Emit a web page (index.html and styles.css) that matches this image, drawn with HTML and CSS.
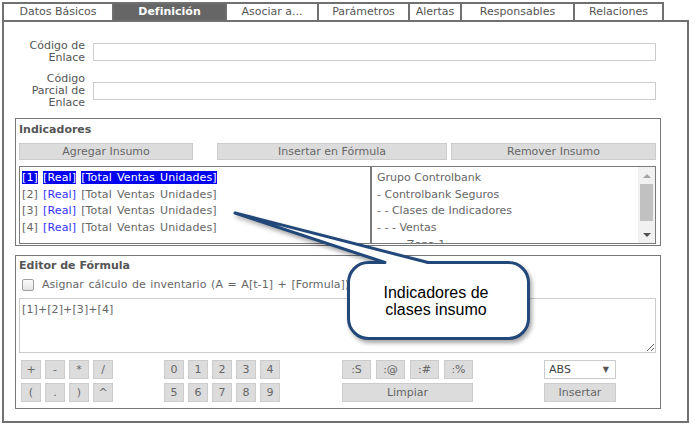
FILE: index.html
```html
<!DOCTYPE html>
<html lang="es">
<head>
<meta charset="utf-8">
<title>Definición</title>
<link rel="stylesheet" href="styles.css">
</head>
<body>
<div class="page">
  <div class="tabs">
    <div class="tab t1">Datos Básicos</div>
    <div class="tab t2 active">Definición</div>
    <div class="tab t3">Asociar a...</div>
    <div class="tab t4">Parámetros</div>
    <div class="tab t5">Alertas</div>
    <div class="tab t6">Responsables</div>
    <div class="tab t7 last">Relaciones</div>
  </div>
  <div class="panel">
    <div class="field-row">
      <div class="flabel">Código de<br>Enlace</div>
      <div class="finput"></div>
    </div>
    <div class="field-row second">
      <div class="flabel">Código<br>Parcial de<br>Enlace</div>
      <div class="finput"></div>
    </div>

    <div class="box indic">
      <div class="box-title">Indicadores</div>
      <div class="btn-row">
        <div class="btn b-agregar">Agregar Insumo</div>
        <div class="btn b-insertar">Insertar en Fórmula</div>
        <div class="btn b-remover">Remover Insumo</div>
      </div>
      <div class="lists">
        <div class="list list-left">
          <div class="item sel"><span class="tok">[1]</span> <span class="tok">[Real]</span> <span class="tok">[Total Ventas Unidades]</span></div>
          <div class="item">[2] <span class="real">[Real]</span> [Total Ventas Unidades]</div>
          <div class="item">[3] <span class="real">[Real]</span> [Total Ventas Unidades]</div>
          <div class="item">[4] <span class="real">[Real]</span> [Total Ventas Unidades]</div>
        </div>
        <div class="list list-right">
          <div class="tree">
            <div class="item">Grupo Controlbank</div>
            <div class="item">- Controlbank Seguros</div>
            <div class="item">- - Clases de Indicadores</div>
            <div class="item">- - - Ventas</div>
            <div class="item">- - - - Zona 1</div>
          </div>
          <div class="sbar">
            <div class="sb-btn"><span class="arr-up"></span></div>
            <div class="sb-track"><div class="sb-thumb"></div></div>
            <div class="sb-btn"><span class="arr-down"></span></div>
          </div>
        </div>
      </div>
    </div>

    <div class="box editor">
      <div class="box-title">Editor de Fórmula</div>
      <div class="check-row">
        <span class="check"></span>
        <span>Asignar cálculo de inventario (A = A[t-1] + [Formula])</span>
      </div>
      <textarea class="formula">[1]+[2]+[3]+[4]</textarea>
      <div class="keypad">
        <div class="kgrid ops">
          <div class="key">+</div><div class="key">-</div><div class="key">*</div><div class="key">/</div>
          <div class="key">(</div><div class="key">.</div><div class="key">)</div><div class="key">^</div>
        </div>
        <div class="kgrid nums">
          <div class="key">0</div><div class="key">1</div><div class="key">2</div><div class="key">3</div><div class="key">4</div>
          <div class="key">5</div><div class="key">6</div><div class="key">7</div><div class="key">8</div><div class="key">9</div>
        </div>
        <div class="kgrid specials">
          <div class="key">:S</div><div class="key">:@</div><div class="key">:#</div><div class="key">:%</div>
          <div class="key wide">Limpiar</div>
        </div>
        <div class="abs-col">
          <div class="select"><span>ABS</span><span class="sel-arrow">▼</span></div>
          <div class="key ins">Insertar</div>
        </div>
      </div>
    </div>
  </div>

  <svg class="callout" width="695" height="428" viewBox="0 0 695 428">
    <path class="bubble" d="M 368.5 262.5 L 385 262.5 L 235 213 L 428 262.5 L 508.5 262.5 A 20 20 0 0 1 528.5 282.5 L 528.5 318.5 A 20 20 0 0 1 508.5 338.5 L 368.5 338.5 A 20 20 0 0 1 348.5 318.5 L 348.5 282.5 A 20 20 0 0 1 368.5 262.5 Z"/>
  </svg>
  <div class="callout-text">Indicadores de<br>clases insumo</div>
</div>
</body>
</html>
```

FILE: styles.css
```css
* { box-sizing: border-box; margin: 0; padding: 0; }
html, body { background: #fff; }
body {
  font-family: "DejaVu Sans", Verdana, sans-serif;
  font-size: 11px;
  color: #666;
}
.page {
  position: relative;
  width: 695px;
  height: 428px;
  padding: 2px 0 0 2px;
}

/* tabs */
.tabs { display: flex; height: 18px; }
.tab {
  height: 18px;
  border-top: 2px solid #707070;
  border-left: 2px solid #707070;
  text-align: center;
  line-height: 16px;
  color: #555;
  white-space: nowrap;
}
.tab.last { border-right: 2px solid #707070; }
.tab.active { background: #666; color: #fff; font-weight: bold; }
.t1 { width: 110px; }
.t2 { width: 113px; }
.t3 { width: 92px; }
.t4 { width: 91px; }
.t5 { width: 52px; }
.t6 { width: 113px; }
.t7 { width: 91px; }

/* panel */
.panel {
  width: 687px;
  height: 403px;
  border: 2px solid #707070;
  padding-top: 18px;
}
.field-row {
  display: flex;
  align-items: center;
  gap: 8px;
}
.field-row.second { margin-top: 9px; }
.flabel {
  width: 81px;
  text-align: right;
  line-height: 12px;
  color: #555;
}
.finput {
  width: 563px;
  height: 18px;
  border: 1px solid #ccc;
  background: #fff;
}

/* boxes */
.box {
  margin-left: 11px;
  width: 646px;
  border: 1px solid #777;
  padding: 0 3px;
}
.box-title {
  font-weight: bold;
  color: #555;
  line-height: 12px;
}
.indic { margin-top: 9px; padding-top: 5px; padding-bottom: 1px; }
.btn-row { display: flex; margin-top: 7px; }
.btn {
  height: 17px;
  background: #dcdcdc;
  border: 1px solid #ccc;
  text-align: center;
  line-height: 15px;
  color: #666;
}
.b-agregar { width: 174px; }
.b-insertar { width: 230px; margin-left: 24px; }
.b-remover { width: 205px; margin-left: 4px; }

.lists { display: flex; margin-top: 6px; height: 78px; }
.list {
  height: 78px;
  border: 1px solid #7a7a7a;
  background: #fff;
  overflow: hidden;
}
.list-left { width: 352px; padding: 3px 2px 0; }
.list-right { width: 285px; display: flex; }
.item { line-height: 16.7px; white-space: nowrap; }
.list-left .item { letter-spacing: 0.12px; word-spacing: 1.5px; }
.item .real { color: #3333ff; }
.item.sel .tok { background: #0000f0; color: #fff; }
.tree { flex: 1; padding: 3px 5px 0; overflow: hidden; }
.sbar {
  width: 17px;
  height: 76px;
  background: #f1f1f1;
  display: flex;
  flex-direction: column;
}
.sb-btn {
  height: 17px;
  display: flex;
  align-items: center;
  justify-content: center;
}
.sb-track { flex: 1; padding: 0 2px; }
.sb-thumb { height: 37px; background: #c1c1c1; }
.arr-up {
  width: 0; height: 0;
  border-left: 4px solid transparent;
  border-right: 4px solid transparent;
  border-bottom: 4px solid #a3a3a3;
}
.arr-down {
  width: 0; height: 0;
  border-left: 4px solid transparent;
  border-right: 4px solid transparent;
  border-top: 4px solid #505050;
}

/* editor */
.editor { margin-top: 9px; padding-top: 4px; padding-bottom: 6px; }
.check-row {
  display: flex;
  align-items: center;
  margin-top: 7px;
  height: 12px;
  line-height: 12px;
  color: #666;
  word-spacing: 1px;
  letter-spacing: 0.05px;
}
.check {
  width: 12px;
  height: 12px;
  margin-left: 3px;
  margin-right: 8px;
  border: 1px solid #a0a0a0;
  border-radius: 2px;
  background: linear-gradient(#fbfbfb, #e4e4e4);
}
.formula {
  display: block;
  margin-top: 7px;
  width: 637px;
  height: 55px;
  border: 1px solid #ccc;
  padding: 4px 2px;
  font-family: "DejaVu Sans", Verdana, sans-serif;
  font-size: 11px;
  line-height: 13px;
  color: #666;
  letter-spacing: 0.1px;
  resize: both;
  outline: none;
}

.keypad { display: flex; margin-top: 7px; }
.kgrid {
  display: grid;
  grid-auto-rows: 19px;
  row-gap: 4px;
}
.ops { grid-template-columns: repeat(4, 20px); column-gap: 4px; margin-left: 2px; }
.nums { grid-template-columns: repeat(5, 20px); column-gap: 4px; margin-left: 51px; }
.specials { grid-template-columns: repeat(4, 29px); column-gap: 5px; margin-left: 62px; }
.key {
  background: #dcdcdc;
  border: 1px solid #ccc;
  text-align: center;
  line-height: 17px;
  color: #666;
}
.key.wide { grid-column: 1 / 5; }
.abs-col {
  width: 72px;
  margin-left: 71px;
  display: flex;
  flex-direction: column;
  gap: 4px;
}
.select {
  height: 19px;
  border: 1px solid #ccc;
  background: #fff;
  display: flex;
  justify-content: space-between;
  align-items: center;
  padding: 0 6px 0 4px;
  color: #444;
}
.sel-arrow { font-size: 8px; color: #555; }
.key.ins { height: 19px; }

/* callout overlay */
.callout {
  position: absolute;
  left: 0;
  top: 0;
  pointer-events: none;
}
.bubble {
  fill: #fff;
  stroke: #22487a;
  stroke-width: 3;
  stroke-linejoin: round;
  filter: drop-shadow(2px 3px 2px rgba(0, 0, 0, 0.35));
}
.callout-text {
  position: absolute;
  left: 348px;
  top: 262px;
  width: 176px;
  height: 78px;
  display: flex;
  align-items: center;
  justify-content: center;
  text-align: center;
  font-family: "Liberation Sans", Arial, sans-serif;
  font-size: 16px;
  line-height: 17px;
  color: #000;
}
```
